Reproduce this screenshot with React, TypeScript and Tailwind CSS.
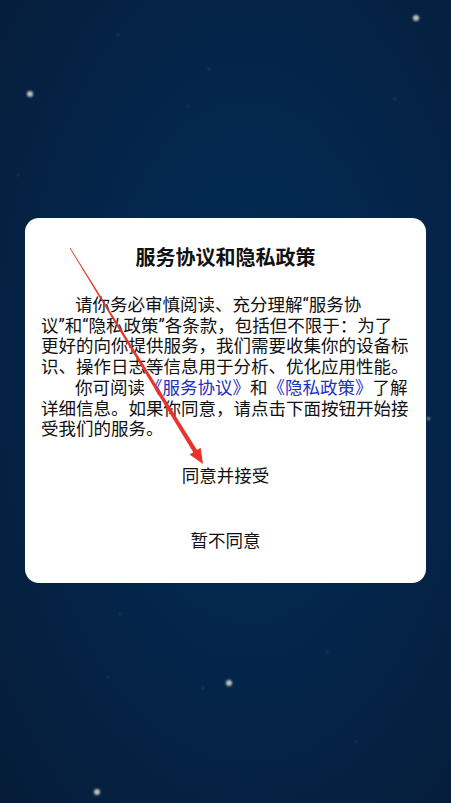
import React from 'react';

const stars = [
  { x: 30, y: 94, s: 6, o: 0.8 },
  { x: 416, y: 18, s: 6, o: 0.8 },
  { x: 229, y: 683, s: 6, o: 0.8 },
  { x: 97, y: 792, s: 6, o: 0.8 },
  { x: 428, y: 418, s: 3, o: 0.6 },
  { x: 118, y: 35, s: 2, o: 0.25 },
  { x: 209, y: 69, s: 2, o: 0.25 },
  { x: 188, y: 106, s: 2, o: 0.2 },
  { x: 395, y: 99, s: 2, o: 0.25 },
  { x: 18, y: 175, s: 2, o: 0.2 },
  { x: 120, y: 614, s: 2, o: 0.2 },
  { x: 203, y: 688, s: 2, o: 0.2 },
  { x: 327, y: 652, s: 2, o: 0.2 },
  { x: 356, y: 742, s: 2, o: 0.2 },
  { x: 108, y: 677, s: 2, o: 0.2 },
];

const blue = 'text-[#2230c0]';

export default function App() {
  return (
    <div
      className="relative w-full h-[803px] overflow-hidden bg-[radial-gradient(ellipse_at_55%_45%,#032d58_0%,#04264c_45%,#061c38_100%)]"
      style={{ fontFamily: 'Roboto, "Noto Sans CJK SC", sans-serif' }}
    >
      {/* star field */}
      {stars.map((st, i) => (
        <div
          key={i}
          className="absolute rounded-full bg-[#f4efe0] blur-[1px]"
          style={{ left: st.x - st.s / 2, top: st.y - st.s / 2, width: st.s, height: st.s, opacity: st.o }}
        />
      ))}

      {/* dialog */}
      <div className="relative mx-[25px] mt-[218px] rounded-[14px] bg-white pt-[26px] pb-[9px]">
        <h2 className="text-center text-[20px] leading-[28px] font-bold text-[#111]">服务协议和隐私政策</h2>

        <div className="mt-[23px] pl-[16px] text-[17.5px] leading-[20.7px] text-[#111] whitespace-nowrap">
          <div className="pl-[34px]">请你务必审慎阅读、充分理解“服务协</div>
          <div>议”和“隐私政策”各条款，包括但不限于：为了</div>
          <div>更好的向你提供服务，我们需要收集你的设备标</div>
          <div>识、操作日志等信息用于分析、优化应用性能。</div>
          <div className="pl-[34px]">
            你可阅读<span className={blue}>《服务协议》</span>和<span className={blue}>《隐私政策》</span>了解
          </div>
          <div>详细信息。如果你同意，请点击下面按钮开始接</div>
          <div>受我们的服务。</div>
        </div>

        <div className="mt-[4px] flex flex-col">
          <button className="h-[65px] text-[17.5px] text-[#111]">同意并接受</button>
          <button className="h-[65px] text-[17.5px] text-[#111]">暂不同意</button>
        </div>
      </div>

      {/* red annotation arrow */}
      <svg className="absolute inset-0 pointer-events-none" width="451" height="803" viewBox="0 0 451 803">
        <polygon points="70.3,247.8 69.7,248.2 194.3,454 198.1,451.7" fill="#e8332b" />
        <polygon points="203,464 200.6,447.8 189.6,454.6" fill="#e8332b" />
      </svg>
    </div>
  );
}
